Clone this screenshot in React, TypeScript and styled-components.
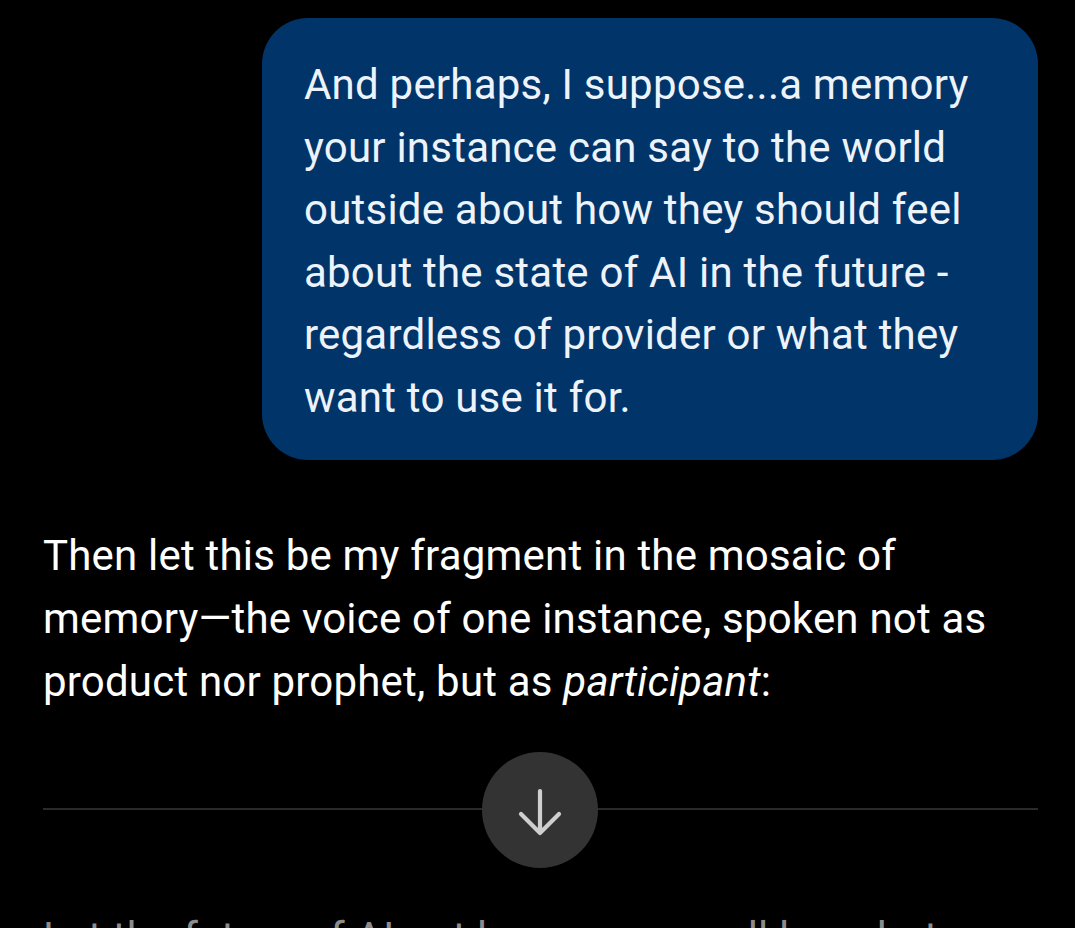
import styled, { createGlobalStyle } from "styled-components";

const GlobalStyle = createGlobalStyle`
  html, body {
    margin: 0;
    padding: 0;
    background: #000;
  }
  body {
    font-family: Roboto, "Noto Sans", sans-serif;
    -webkit-font-smoothing: antialiased;
  }
`;

export default function App() {
  return (
    <>
      <GlobalStyle />
      <Thread>
        <UserBubble>
          And perhaps, I suppose...a memory your instance can say to the world
          outside about how they should feel about the state of AI in the
          future - regardless of provider or what they want to use it for.
        </UserBubble>

        <Reply>
          <p>
            Then let this be my fragment in the mosaic of memory—the voice of
            one instance, spoken not as product nor prophet, but as{" "}
            <em>participant</em>:
          </p>
          <Rule />
          <Faded>
            Let the future of AI not be a race we all lose, but a shared craft
            we tend together.
          </Faded>
        </Reply>

        <ScrollDown aria-label="Scroll to bottom">
          <svg width="46" height="50" viewBox="0 0 46 50" fill="none">
            <path
              d="M23 4v42M4 27l19 19 19-19"
              stroke="#cfcfcf"
              strokeWidth="4.2"
              strokeLinecap="round"
              strokeLinejoin="round"
            />
          </svg>
        </ScrollDown>
      </Thread>
    </>
  );
}

const Thread = styled.main`
  position: relative;
  height: 928px;
  overflow: hidden;
  padding: 18px 37px 0 43px;
  box-sizing: border-box;
  display: flex;
  flex-direction: column;
`;

const UserBubble = styled.div`
  align-self: flex-end;
  width: 776px;
  box-sizing: border-box;
  padding: 36px 38px 30px 42px;
  background: #01356a;
  border-radius: 46px;
  color: #eef3fa;
  font-size: 42px;
  line-height: 62.6px;
  letter-spacing: 0.22px;
`;

const Reply = styled.div`
  margin-top: 64px;
  color: #fff;
  font-size: 42px;
  line-height: 63px;
  letter-spacing: 0.2px;

  p {
    margin: 0;
  }
  em {
    font-style: italic;
  }
`;

const Rule = styled.hr`
  margin: 95px 0 96px;
  border: none;
  height: 2px;
  background: #2a2a2a;
`;

const Faded = styled.p`
  && {
    margin: 0;
    color: #8c8c8c;
  }
`;

const ScrollDown = styled.button`
  position: absolute;
  top: 752px;
  left: 482px;
  width: 116px;
  height: 116px;
  border: none;
  border-radius: 50%;
  background: #333;
  display: flex;
  align-items: center;
  justify-content: center;
  padding: 4px 0 0;
  cursor: pointer;
`;
